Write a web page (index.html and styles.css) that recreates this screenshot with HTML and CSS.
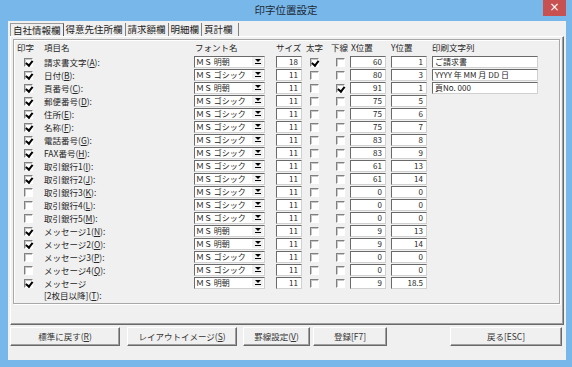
FILE: index.html
```html
<!DOCTYPE html>
<html lang="ja">
<head>
    <meta charset="UTF-8">
    <title>印字位置設定</title>
    <link rel="stylesheet" href="styles.css">
</head>
<body>
<div class="window">
    <div class="titlebar">
        <span class="title">印字位置設定</span>
        <span class="close">×</span>
    </div>
    <div class="client">
        <div class="tabs">
            <span class="tab active">自社情報欄</span>
            <span class="tab">得意先住所欄</span>
            <span class="tab">請求額欄</span>
            <span class="tab">明細欄</span>
            <span class="tab">頁計欄</span>
        </div>
        <div class="panel">
            <div class="group">
                <div class="grid">
                    <span class="hd h-print">印字</span>
                    <span class="hd">項目名</span>
                    <span class="hd h-font">フォント名</span>
                    <span class="hd">サイズ</span>
                    <span class="hd h-bold">太字</span>
                    <span class="hd h-ul">下線</span>
                    <span class="hd h-x">X位置</span>
                    <span class="hd">Y位置</span>
                    <span class="hd">印刷文字列</span>

                    <i class="chk pr on"></i>
                    <span class="lbl">請求書文字(<u>A</u>):</span>
                    <span class="combo"><span class="combo-text">ＭＳ 明朝</span><span class="drop"></span></span>
                    <span class="num sz">18</span>
                    <i class="chk bd on"></i>
                    <i class="chk ul"></i>
                    <span class="num xy">60</span>
                    <span class="num xy">1</span>
                    <span class="text-in">ご請求書</span>

                    <i class="chk pr on"></i>
                    <span class="lbl">日付(<u>B</u>):</span>
                    <span class="combo"><span class="combo-text">ＭＳ ゴシック</span><span class="drop"></span></span>
                    <span class="num sz">11</span>
                    <i class="chk bd"></i>
                    <i class="chk ul"></i>
                    <span class="num xy">80</span>
                    <span class="num xy">3</span>
                    <span class="text-in">YYYY 年 MM 月 DD 日</span>

                    <i class="chk pr on"></i>
                    <span class="lbl">頁番号(<u>C</u>):</span>
                    <span class="combo"><span class="combo-text">ＭＳ 明朝</span><span class="drop"></span></span>
                    <span class="num sz">11</span>
                    <i class="chk bd"></i>
                    <i class="chk ul on"></i>
                    <span class="num xy">91</span>
                    <span class="num xy">1</span>
                    <span class="text-in">頁No. 000</span>

                    <i class="chk pr on"></i>
                    <span class="lbl">郵便番号(<u>D</u>):</span>
                    <span class="combo"><span class="combo-text">ＭＳ ゴシック</span><span class="drop"></span></span>
                    <span class="num sz">11</span>
                    <i class="chk bd"></i>
                    <i class="chk ul"></i>
                    <span class="num xy">75</span>
                    <span class="num xy">5</span>
                    <span></span>

                    <i class="chk pr on"></i>
                    <span class="lbl">住所(<u>E</u>):</span>
                    <span class="combo"><span class="combo-text">ＭＳ ゴシック</span><span class="drop"></span></span>
                    <span class="num sz">11</span>
                    <i class="chk bd"></i>
                    <i class="chk ul"></i>
                    <span class="num xy">75</span>
                    <span class="num xy">6</span>
                    <span></span>

                    <i class="chk pr on"></i>
                    <span class="lbl">名称(<u>F</u>):</span>
                    <span class="combo"><span class="combo-text">ＭＳ ゴシック</span><span class="drop"></span></span>
                    <span class="num sz">11</span>
                    <i class="chk bd"></i>
                    <i class="chk ul"></i>
                    <span class="num xy">75</span>
                    <span class="num xy">7</span>
                    <span></span>

                    <i class="chk pr on"></i>
                    <span class="lbl">電話番号(<u>G</u>):</span>
                    <span class="combo"><span class="combo-text">ＭＳ ゴシック</span><span class="drop"></span></span>
                    <span class="num sz">11</span>
                    <i class="chk bd"></i>
                    <i class="chk ul"></i>
                    <span class="num xy">83</span>
                    <span class="num xy">8</span>
                    <span></span>

                    <i class="chk pr on"></i>
                    <span class="lbl">FAX番号(<u>H</u>):</span>
                    <span class="combo"><span class="combo-text">ＭＳ ゴシック</span><span class="drop"></span></span>
                    <span class="num sz">11</span>
                    <i class="chk bd"></i>
                    <i class="chk ul"></i>
                    <span class="num xy">83</span>
                    <span class="num xy">9</span>
                    <span></span>

                    <i class="chk pr on"></i>
                    <span class="lbl">取引銀行1(<u>I</u>):</span>
                    <span class="combo"><span class="combo-text">ＭＳ ゴシック</span><span class="drop"></span></span>
                    <span class="num sz">11</span>
                    <i class="chk bd"></i>
                    <i class="chk ul"></i>
                    <span class="num xy">61</span>
                    <span class="num xy">13</span>
                    <span></span>

                    <i class="chk pr on"></i>
                    <span class="lbl">取引銀行2(<u>J</u>):</span>
                    <span class="combo"><span class="combo-text">ＭＳ ゴシック</span><span class="drop"></span></span>
                    <span class="num sz">11</span>
                    <i class="chk bd"></i>
                    <i class="chk ul"></i>
                    <span class="num xy">61</span>
                    <span class="num xy">14</span>
                    <span></span>

                    <i class="chk pr"></i>
                    <span class="lbl">取引銀行3(<u>K</u>):</span>
                    <span class="combo"><span class="combo-text">ＭＳ ゴシック</span><span class="drop"></span></span>
                    <span class="num sz">11</span>
                    <i class="chk bd"></i>
                    <i class="chk ul"></i>
                    <span class="num xy">0</span>
                    <span class="num xy">0</span>
                    <span></span>

                    <i class="chk pr"></i>
                    <span class="lbl">取引銀行4(<u>L</u>):</span>
                    <span class="combo"><span class="combo-text">ＭＳ ゴシック</span><span class="drop"></span></span>
                    <span class="num sz">11</span>
                    <i class="chk bd"></i>
                    <i class="chk ul"></i>
                    <span class="num xy">0</span>
                    <span class="num xy">0</span>
                    <span></span>

                    <i class="chk pr"></i>
                    <span class="lbl">取引銀行5(<u>M</u>):</span>
                    <span class="combo"><span class="combo-text">ＭＳ ゴシック</span><span class="drop"></span></span>
                    <span class="num sz">11</span>
                    <i class="chk bd"></i>
                    <i class="chk ul"></i>
                    <span class="num xy">0</span>
                    <span class="num xy">0</span>
                    <span></span>

                    <i class="chk pr on"></i>
                    <span class="lbl">メッセージ1(<u>N</u>):</span>
                    <span class="combo"><span class="combo-text">ＭＳ 明朝</span><span class="drop"></span></span>
                    <span class="num sz">11</span>
                    <i class="chk bd"></i>
                    <i class="chk ul"></i>
                    <span class="num xy">9</span>
                    <span class="num xy">13</span>
                    <span></span>

                    <i class="chk pr on"></i>
                    <span class="lbl">メッセージ2(<u>O</u>):</span>
                    <span class="combo"><span class="combo-text">ＭＳ 明朝</span><span class="drop"></span></span>
                    <span class="num sz">11</span>
                    <i class="chk bd"></i>
                    <i class="chk ul"></i>
                    <span class="num xy">9</span>
                    <span class="num xy">14</span>
                    <span></span>

                    <i class="chk pr"></i>
                    <span class="lbl">メッセージ3(<u>P</u>):</span>
                    <span class="combo"><span class="combo-text">ＭＳ ゴシック</span><span class="drop"></span></span>
                    <span class="num sz">11</span>
                    <i class="chk bd"></i>
                    <i class="chk ul"></i>
                    <span class="num xy">0</span>
                    <span class="num xy">0</span>
                    <span></span>

                    <i class="chk pr"></i>
                    <span class="lbl">メッセージ4(<u>Q</u>):</span>
                    <span class="combo"><span class="combo-text">ＭＳ ゴシック</span><span class="drop"></span></span>
                    <span class="num sz">11</span>
                    <i class="chk bd"></i>
                    <i class="chk ul"></i>
                    <span class="num xy">0</span>
                    <span class="num xy">0</span>
                    <span></span>

                    <i class="chk pr on"></i>
                    <span class="lbl">メッセージ<br>[2枚目以降](<u>T</u>):</span>
                    <span class="combo"><span class="combo-text">ＭＳ 明朝</span><span class="drop"></span></span>
                    <span class="num sz">11</span>
                    <i class="chk bd"></i>
                    <i class="chk ul"></i>
                    <span class="num xy">9</span>
                    <span class="num xy">18.5</span>
                    <span></span>
                </div>
            </div>
        </div>
        <div class="buttons">
            <span class="btn b-reset">標準に戻す(<u>R</u>)</span>
            <span class="btn b-layout">レイアウトイメージ(<u>S</u>)</span>
            <span class="btn b-rule">罫線設定(<u>V</u>)</span>
            <span class="btn b-save">登録[F7]</span>
            <span class="btn b-back">戻る[ESC]</span>
        </div>
    </div>
</div>
</body>
</html>
```
FILE: styles.css
```css
* {
    box-sizing: border-box;
}
body {
    margin: 0;
    width: 572px;
    height: 367px;
    overflow: hidden;
    background: #78b7ea;
    font-family: "Noto Sans CJK JP", "Noto Sans", sans-serif;
    font-size: 8.5px;
    color: #262626;
}
.window {
    height: 367px;
    display: flex;
    flex-direction: column;
}
.titlebar {
    height: 21px;
    display: grid;
    grid-template-columns: 1fr auto 1fr;
    align-items: start;
}
.title {
    grid-column: 2;
    font-size: 10.5px;
    line-height: 20px;
    color: #1e2a36;
}
.close {
    grid-column: 3;
    justify-self: end;
    margin-right: 6px;
    width: 23px;
    height: 16px;
    background: #c75050;
    color: #fff;
    font-size: 12px;
    line-height: 15px;
    text-align: center;
    font-family: "DejaVu Sans", sans-serif;
}
.client {
    flex: 1;
    margin: 0 6px 7px 8px;
    background: #f0f0f0;
    display: flex;
    flex-direction: column;
}

/* tabs */
.tabs {
    display: flex;
    margin: 2px 0 0 2px;
    height: 13px;
}
.tab {
    padding: 0 2px;
    font-size: 9.5px;
    line-height: 12px;
    border-right: 1px solid #808080;
    color: #222;
}
.tab.active {
    border: 1px solid #9a9a9a;
    border-right-color: #5a5a5a;
    border-bottom: none;
    background: #f0f0f0;
}
.tab:last-child {
    padding-right: 5px;
}
.panel {
    margin: 0 2px;
    height: 289px;
    border: 1px solid;
    border-color: #fff #696969 #696969 #fff;
    box-shadow: inset -1px -1px 0 #a0a0a0;
    padding: 2px 3px 0 2px;
}
.group {
    border: 1px solid #a8a8a8;
    box-shadow: 1px 1px 0 #fff, inset 1px 1px 0 #fff;
}
.grid {
    display: grid;
    grid-template-columns: 30px 150px 82px 28px 26px 20px 41px 41px 108px;
    grid-template-rows: 16px repeat(17, 13px) 26px;
    align-items: start;
}
.hd {
    line-height: 14px;
    white-space: nowrap;
}
.h-print { margin-left: 3px; }
.h-font { margin-left: 1px; }
.h-bold { margin-left: 2px; }
.h-ul { margin-left: 1px; }
.h-x { margin-left: 1px; }

.lbl {
    line-height: 12px;
    white-space: nowrap;
}

/* checkboxes */
.chk {
    position: relative;
    display: block;
    width: 9px;
    height: 9px;
    margin-top: 2px;
    background: #fff;
    border: 1px solid;
    border-color: #808080 #fff #fff #808080;
    box-shadow: inset 1px 1px 0 #c8c8c8;
}
.chk.pr { margin-left: 10px; }
.chk.bd { margin-left: 6px; }
.chk.ul { margin-left: 6px; }
.chk.on::after {
    content: "";
    position: absolute;
    left: 2px;
    top: -0.5px;
    width: 2.5px;
    height: 4.5px;
    border: solid #000;
    border-width: 0 2px 2px 0;
    transform: rotate(38deg);
}

/* combo box */
.combo {
    display: flex;
    width: 71px;
    height: 12px;
    background: #fff;
    border: 1px solid;
    border-color: #6a6a6a #d0d0d0 #d0d0d0 #6a6a6a;
}
.combo-text {
    flex: 1;
    padding-left: 1px;
    font-size: 8px;
    line-height: 10px;
    white-space: nowrap;
}
.drop {
    width: 11px;
    margin: 0 1px 1px 0;
    background: #f0f0f0;
    display: flex;
    flex-direction: column;
    align-items: center;
    justify-content: center;
}
.drop::before {
    content: "";
    border-left: 3px solid transparent;
    border-right: 3px solid transparent;
    border-top: 3px solid #000;
}
.drop::after {
    content: "";
    width: 6px;
    height: 1px;
    margin-top: 1px;
    background: #000;
}

/* text fields */
.num,
.text-in {
    display: block;
    height: 12px;
    background: #fff;
    border: 1px solid;
    border-color: #6a6a6a #d0d0d0 #d0d0d0 #6a6a6a;
    font-size: 8px;
    line-height: 10px;
    white-space: nowrap;
}
.num {
    text-align: right;
    padding-right: 3px;
}
.sz { width: 26px; }
.xy { width: 36px; }
.text-in {
    width: 106px;
    padding-left: 2px;
}

/* bottom buttons */
.buttons {
    display: flex;
    margin: 2px 4px 0 2px;
}
.btn {
    height: 19px;
    border: 1px solid;
    border-color: #fff #696969 #696969 #fff;
    box-shadow: inset -1px -1px 0 #a0a0a0;
    background: #f0f0f0;
    line-height: 17px;
    text-align: center;
    color: #333;
    white-space: nowrap;
}
.b-reset { width: 110px; }
.b-layout { width: 110px; margin-left: 7px; }
.b-rule { width: 67px; margin-left: 6px; }
.b-save { width: 74px; margin-left: 3px; }
.b-back { width: 112px; margin-left: auto; }
```
